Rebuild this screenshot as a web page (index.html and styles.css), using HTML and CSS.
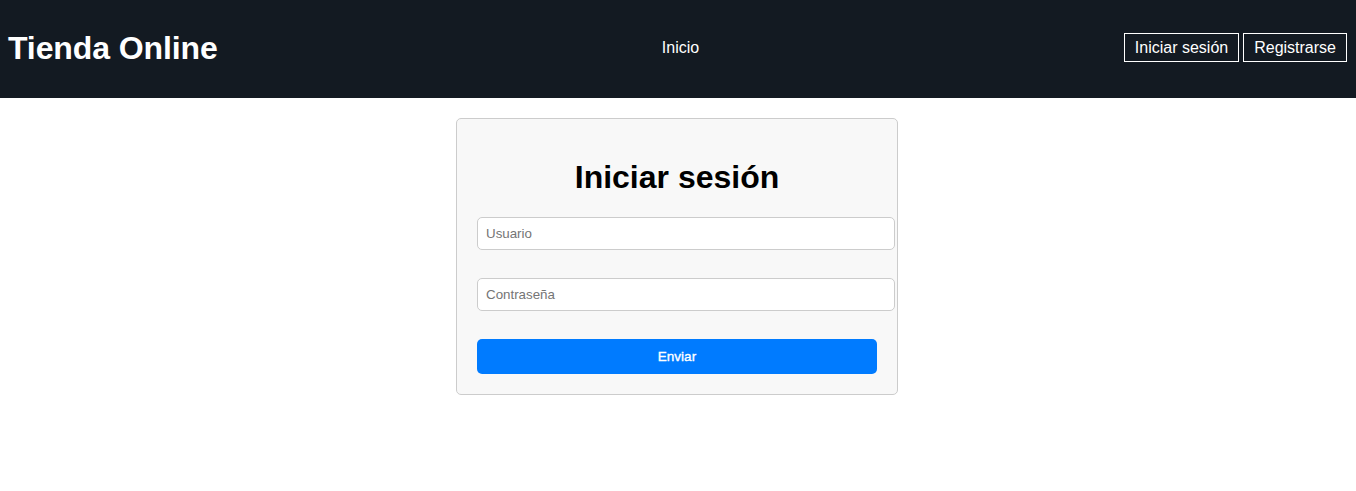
FILE: index.html
```html
<!DOCTYPE html>
<html lang="es">
<head>
<meta charset="utf-8">
<title>Tienda Online</title>
<link rel="stylesheet" href="styles.css">
</head>
<body>
<header class="topbar">
  <h1 class="brand">Tienda Online</h1>
  <nav class="mainnav"><a href="#" class="navlink">Inicio</a></nav>
  <div class="auth">
    <a href="#" class="authbtn">Iniciar sesión</a>
    <a href="#" class="authbtn">Registrarse</a>
  </div>
</header>
<main class="content">
  <form class="card">
    <h2 class="card-title">Iniciar sesión</h2>
    <input class="field" type="text" placeholder="Usuario">
    <input class="field" type="password" placeholder="Contraseña">
    <button class="submit" type="button">Enviar</button>
  </form>
</main>
</body>
</html>
```
FILE: styles.css
```css
* { box-sizing: content-box; }
body {
  margin: 0;
  font-family: "Liberation Sans", Arial, sans-serif;
  background: #ffffff;
  color: #000;
}
.topbar {
  height: 98px;
  background: #131a22;
  display: grid;
  grid-template-columns: 1fr auto 1fr;
  align-items: center;
  padding: 0 9px 0 8px;
}
.brand {
  margin: 0;
  font-size: 32px;
  font-weight: bold;
  color: #fff;
  line-height: 37px;
  padding-bottom: 1px;
  letter-spacing: -0.1px;
}
.mainnav { padding-left: 6px; padding-bottom: 2px; }
.navlink {
  color: #fff;
  text-decoration: none;
  font-size: 16px;
}
.auth {
  display: flex;
  justify-content: flex-end;
  gap: 4px;
  padding-bottom: 4px;
}
.authbtn {
  color: #fff;
  text-decoration: none;
  font-size: 16px;
  line-height: 17px;
  padding: 5px 10px;
  border: 1px solid #fff;
}
.content {
  padding-top: 20px;
}
.card {
  width: 400px;
  margin: 0 auto;
  padding: 20px;
  background: #f8f8f8;
  border: 1px solid #cccccc;
  border-radius: 5px;
  display: flex;
  flex-direction: column;
  position: relative;
  left: -1px;
}
.card-title {
  margin: 20px 0 21px;
  font-size: 32px;
  line-height: 37px;
  text-align: center;
  font-weight: bold;
}
.field {
  width: 400px;
  padding: 8px;
  font-family: "Liberation Sans", Arial, sans-serif;
  font-size: 13.333px;
  line-height: 15px;
  border: 1px solid #cccccc;
  border-radius: 5px;
  background: #fff;
  margin: 0 0 28px;
  outline: none;
}
.field::placeholder { color: #757575; }
.submit {
  width: 400px;
  height: 35px;
  box-sizing: border-box;
  border: none;
  border-radius: 5px;
  background: #007bff;
  color: #fff;
  font-family: "Liberation Sans", Arial, sans-serif;
  font-size: 13.5px;
  font-weight: normal;
  -webkit-text-stroke: 0.35px #fff;
  padding: 0;
}
```
